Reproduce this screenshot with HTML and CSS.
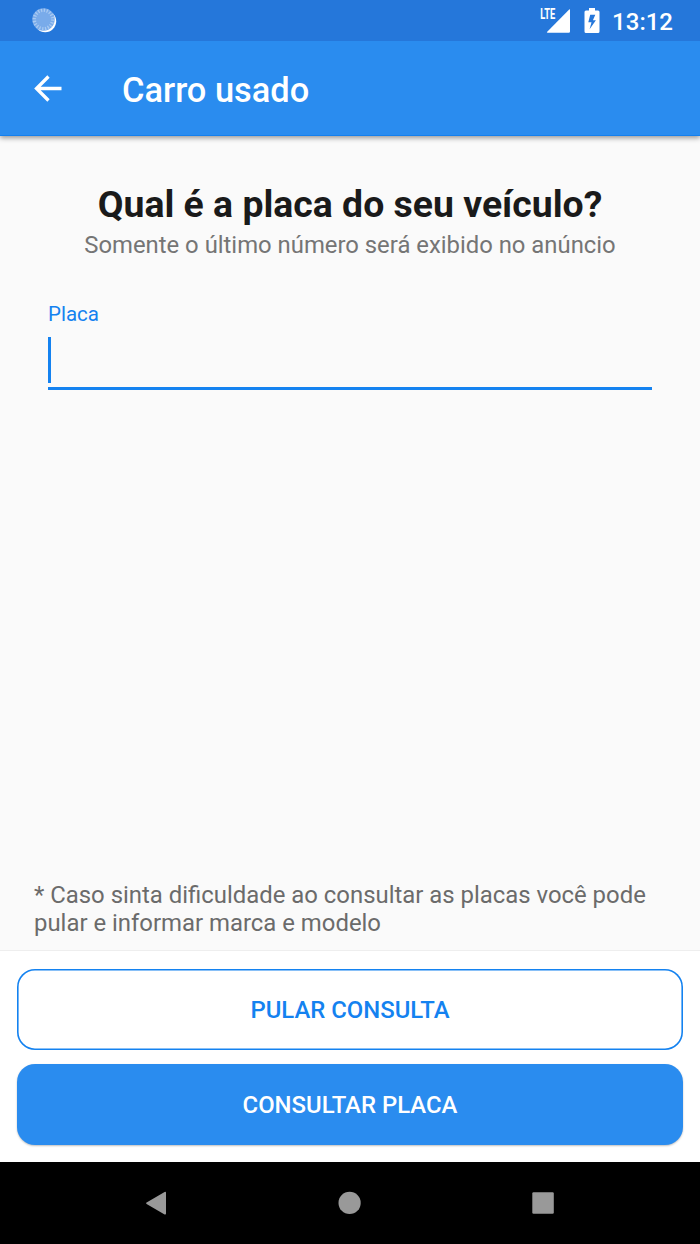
FILE: index.html
```html
<!DOCTYPE html>
<html lang="pt-BR">
<head>
    <meta charset="UTF-8">
    <meta name="viewport" content="width=device-width, initial-scale=1.0">
    <title>Carro usado</title>
    <link rel="stylesheet" href="styles.css">
</head>
<body>
    <div class="status-bar">
        <svg class="sync-icon" width="26" height="26" viewBox="0 0 26 26">
            <circle cx="13.200" cy="13.200" r="11" fill="#fff"/>
            <circle cx="11.500" cy="11.500" r="11.200" fill="#79abea"/>
            <circle cx="11.500" cy="11.500" r="9.200" fill="none" stroke="#a9caf2" stroke-width="3.400" stroke-dasharray="1.3 1.590"/>
        </svg>
        <div class="status-right">
            <svg class="signal-icon" width="32" height="28" viewBox="0 0 32 28">
                <text class="lte" x="0.300" y="12" textLength="15" lengthAdjust="spacingAndGlyphs">LTE</text>
                <path d="M29.200 2.400q.8-.6.8.5v21.600q0 1.300-1.300 1.300H7.800q-1.600 0-.6-1.100z" fill="#fff"/>
            </svg>
            <svg class="battery-icon" width="16" height="26" viewBox="0 0 16 26">
                <path d="M5 0h6v2.500h3q1.500 0 1.500 1.500v19.500q0 1.500-1.500 1.500h-12q-1.500 0-1.500-1.500V4q0-1.500 1.500-1.500h3z" fill="#fff"/>
                <path d="M11.300 6.800H6.200L4.300 14.300h3.200L5.600 21.200l6.300-9H8.900z" fill="#2577da"/>
            </svg>
            <span class="clock">13:12</span>
        </div>
    </div>

    <header class="app-bar">
        <svg class="back-icon" width="28" height="28" viewBox="0 0 28 28">
            <path d="M27.500 13.500H2.500M14.500 1.500l-12 12 12 12" fill="none" stroke="#fff" stroke-width="3.300"/>
        </svg>
        <h1>Carro usado</h1>
    </header>

    <main class="content">
        <h2>Qual é a placa do seu veículo?</h2>
        <p class="subtitle">Somente o último número será exibido no anúncio</p>
        <div class="field">
            <label>Placa</label>
            <div class="field-input"><span class="cursor"></span></div>
        </div>
        <p class="note">* Caso sinta dificuldade ao consultar as placas você pode pular e informar marca e modelo</p>
    </main>

    <div class="actions">
        <button class="btn btn-outline">PULAR CONSULTA</button>
        <button class="btn btn-primary">CONSULTAR PLACA</button>
    </div>

    <nav class="nav-bar">
        <svg width="24" height="24" viewBox="0 0 24 24">
            <path d="M1.600 11.600L19.600 1q1.400-.7 1.400.8v20.800q0 1.500-1.400.8L1.600 12.900q-1-.65 0-1.300z" fill="#999"/>
        </svg>
        <svg width="24" height="24" viewBox="0 0 24 24">
            <circle cx="11.600" cy="11.900" r="11.100" fill="#999"/>
        </svg>
        <svg width="24" height="24" viewBox="0 0 24 24">
            <rect x="1.300" y="1.300" width="21.500" height="21.500" rx="1.200" fill="#999"/>
        </svg>
    </nav>
</body>
</html>
```

FILE: styles.css
```css
* {
    margin: 0;
    padding: 0;
    box-sizing: border-box;
}
body {
    width: 700px;
    height: 1244px;
    display: flex;
    flex-direction: column;
    font-family: Roboto, "Liberation Sans", sans-serif;
    background-color: #fafafa;
    overflow: hidden;
}
.status-bar {
    position: relative;
    z-index: 2;
    height: 41px;
    display: flex;
    justify-content: space-between;
    padding: 8px 27px 0 32px;
    background-color: #2577da;
}
.status-right {
    display: flex;
}
.signal-icon {
    margin-top: -1px;
    overflow: visible;
}
.lte {
    font-family: Roboto, sans-serif;
    font-size: 14.5px;
    font-weight: 700;
    fill: #fff;
}
.battery-icon {
    margin-left: 12px;
}
.clock {
    margin-left: 12px;
    font-size: 24px;
    font-weight: 500;
    line-height: 28px;
    color: #fff;
}
.app-bar {
    position: relative;
    z-index: 1;
    height: 95px;
    display: flex;
    align-items: center;
    padding: 2px 34px 0;
    background-color: #2a8cef;
    border-bottom: 1px solid #1480ee;
    box-shadow: 0 2px 5px rgba(0, 0, 0, 0.4);
}
.app-bar h1 {
    margin-left: 60px;
    padding-top: 2px;
    font-size: 34.4px;
    font-weight: 500;
    color: #fff;
}
.content {
    flex: 1;
    display: flex;
    flex-direction: column;
    padding: 46px 34px 13px;
}
h2 {
    font-size: 37.4px;
    font-weight: 700;
    line-height: 44px;
    text-align: center;
    color: #1a1a1a;
}
.subtitle {
    margin-top: 5px;
    font-size: 23.85px;
    line-height: 28px;
    text-align: center;
    color: #757575;
}
.field {
    margin: 43px 14px 0;
}
.field label {
    display: block;
    font-size: 20.5px;
    line-height: 24px;
    color: #1482f0;
}
.field-input {
    height: 64px;
    padding-top: 11px;
    border-bottom: 3px solid #1482f0;
}
.cursor {
    display: block;
    width: 3px;
    height: 46px;
    background-color: #1482f0;
}
.note {
    margin-top: auto;
    font-size: 23.9px;
    line-height: 28px;
    color: #6b6b6b;
}
.actions {
    height: 212px;
    display: flex;
    flex-direction: column;
    gap: 14px;
    padding: 18px 17px 0;
    background-color: #fff;
    border-top: 1px solid #eee;
}
.btn {
    height: 81px;
    padding-top: 1px;
    border: none;
    border-radius: 18px;
    font-family: inherit;
    font-size: 23.9px;
    font-weight: 500;
}
.btn-outline {
    background-color: #fff;
    box-shadow: inset 0 0 0 1.6px #1482f0;
    color: #1482f0;
}
.btn-primary {
    background-color: #2a8cef;
    box-shadow: 0 1px 2px rgba(0, 0, 0, 0.25);
    color: #fff;
}
.nav-bar {
    height: 82px;
    display: flex;
    justify-content: space-between;
    align-items: center;
    padding: 0 145px;
    background-color: #000;
}
```
